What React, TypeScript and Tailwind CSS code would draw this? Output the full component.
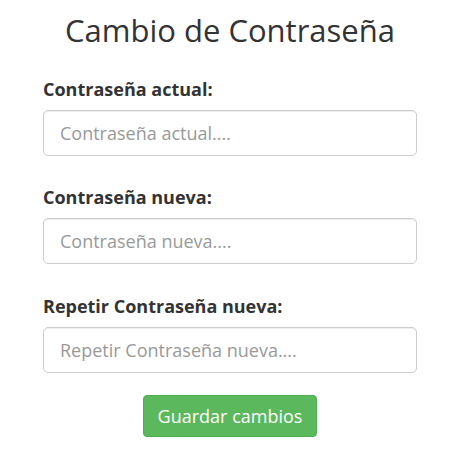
import React from "react";

const fields = [
  { label: "Contraseña actual:", placeholder: "Contraseña actual....", gap: "" },
  { label: "Contraseña nueva:", placeholder: "Contraseña nueva....", gap: "mt-[28px]" },
  { label: "Repetir Contraseña nueva:", placeholder: "Repetir Contraseña nueva....", gap: "mt-[29px]" },
];

export default function App() {
  return (
    <div
      className="min-h-screen bg-white text-[#333]"
      style={{ fontFamily: '"Open Sans", "Liberation Sans", sans-serif' }}
    >
      <div className="ml-[43px] w-[374px] pt-[9px]">
        <h1 className="text-center text-[31px] leading-[42px] font-normal">
          Cambio de Contraseña
        </h1>
        <form className="mt-[25px] flex flex-col">
          {fields.map((f) => (
            <div key={f.label} className={`flex flex-col ${f.gap}`}>
              <label className="text-[18px] leading-[26px] font-bold mb-[8px]">
                {f.label}
              </label>
              <input
                type="password"
                placeholder={f.placeholder}
                className="h-[46px] w-full rounded-[5px] border border-[#ccc] bg-white px-[16px] text-[18px] text-[#555] shadow-[inset_0_1px_1px_rgba(0,0,0,0.075)] outline-none placeholder:text-[#999]"
              />
            </div>
          ))}
        </form>
        <div className="mt-[22px] flex justify-center">
          <button
            type="button"
            className="h-[42px] rounded-[4px] border border-[#4cae4c] bg-[#5cb85c] px-[14px] text-[18px] text-white"
          >
            Guardar cambios
          </button>
        </div>
      </div>
    </div>
  );
}
